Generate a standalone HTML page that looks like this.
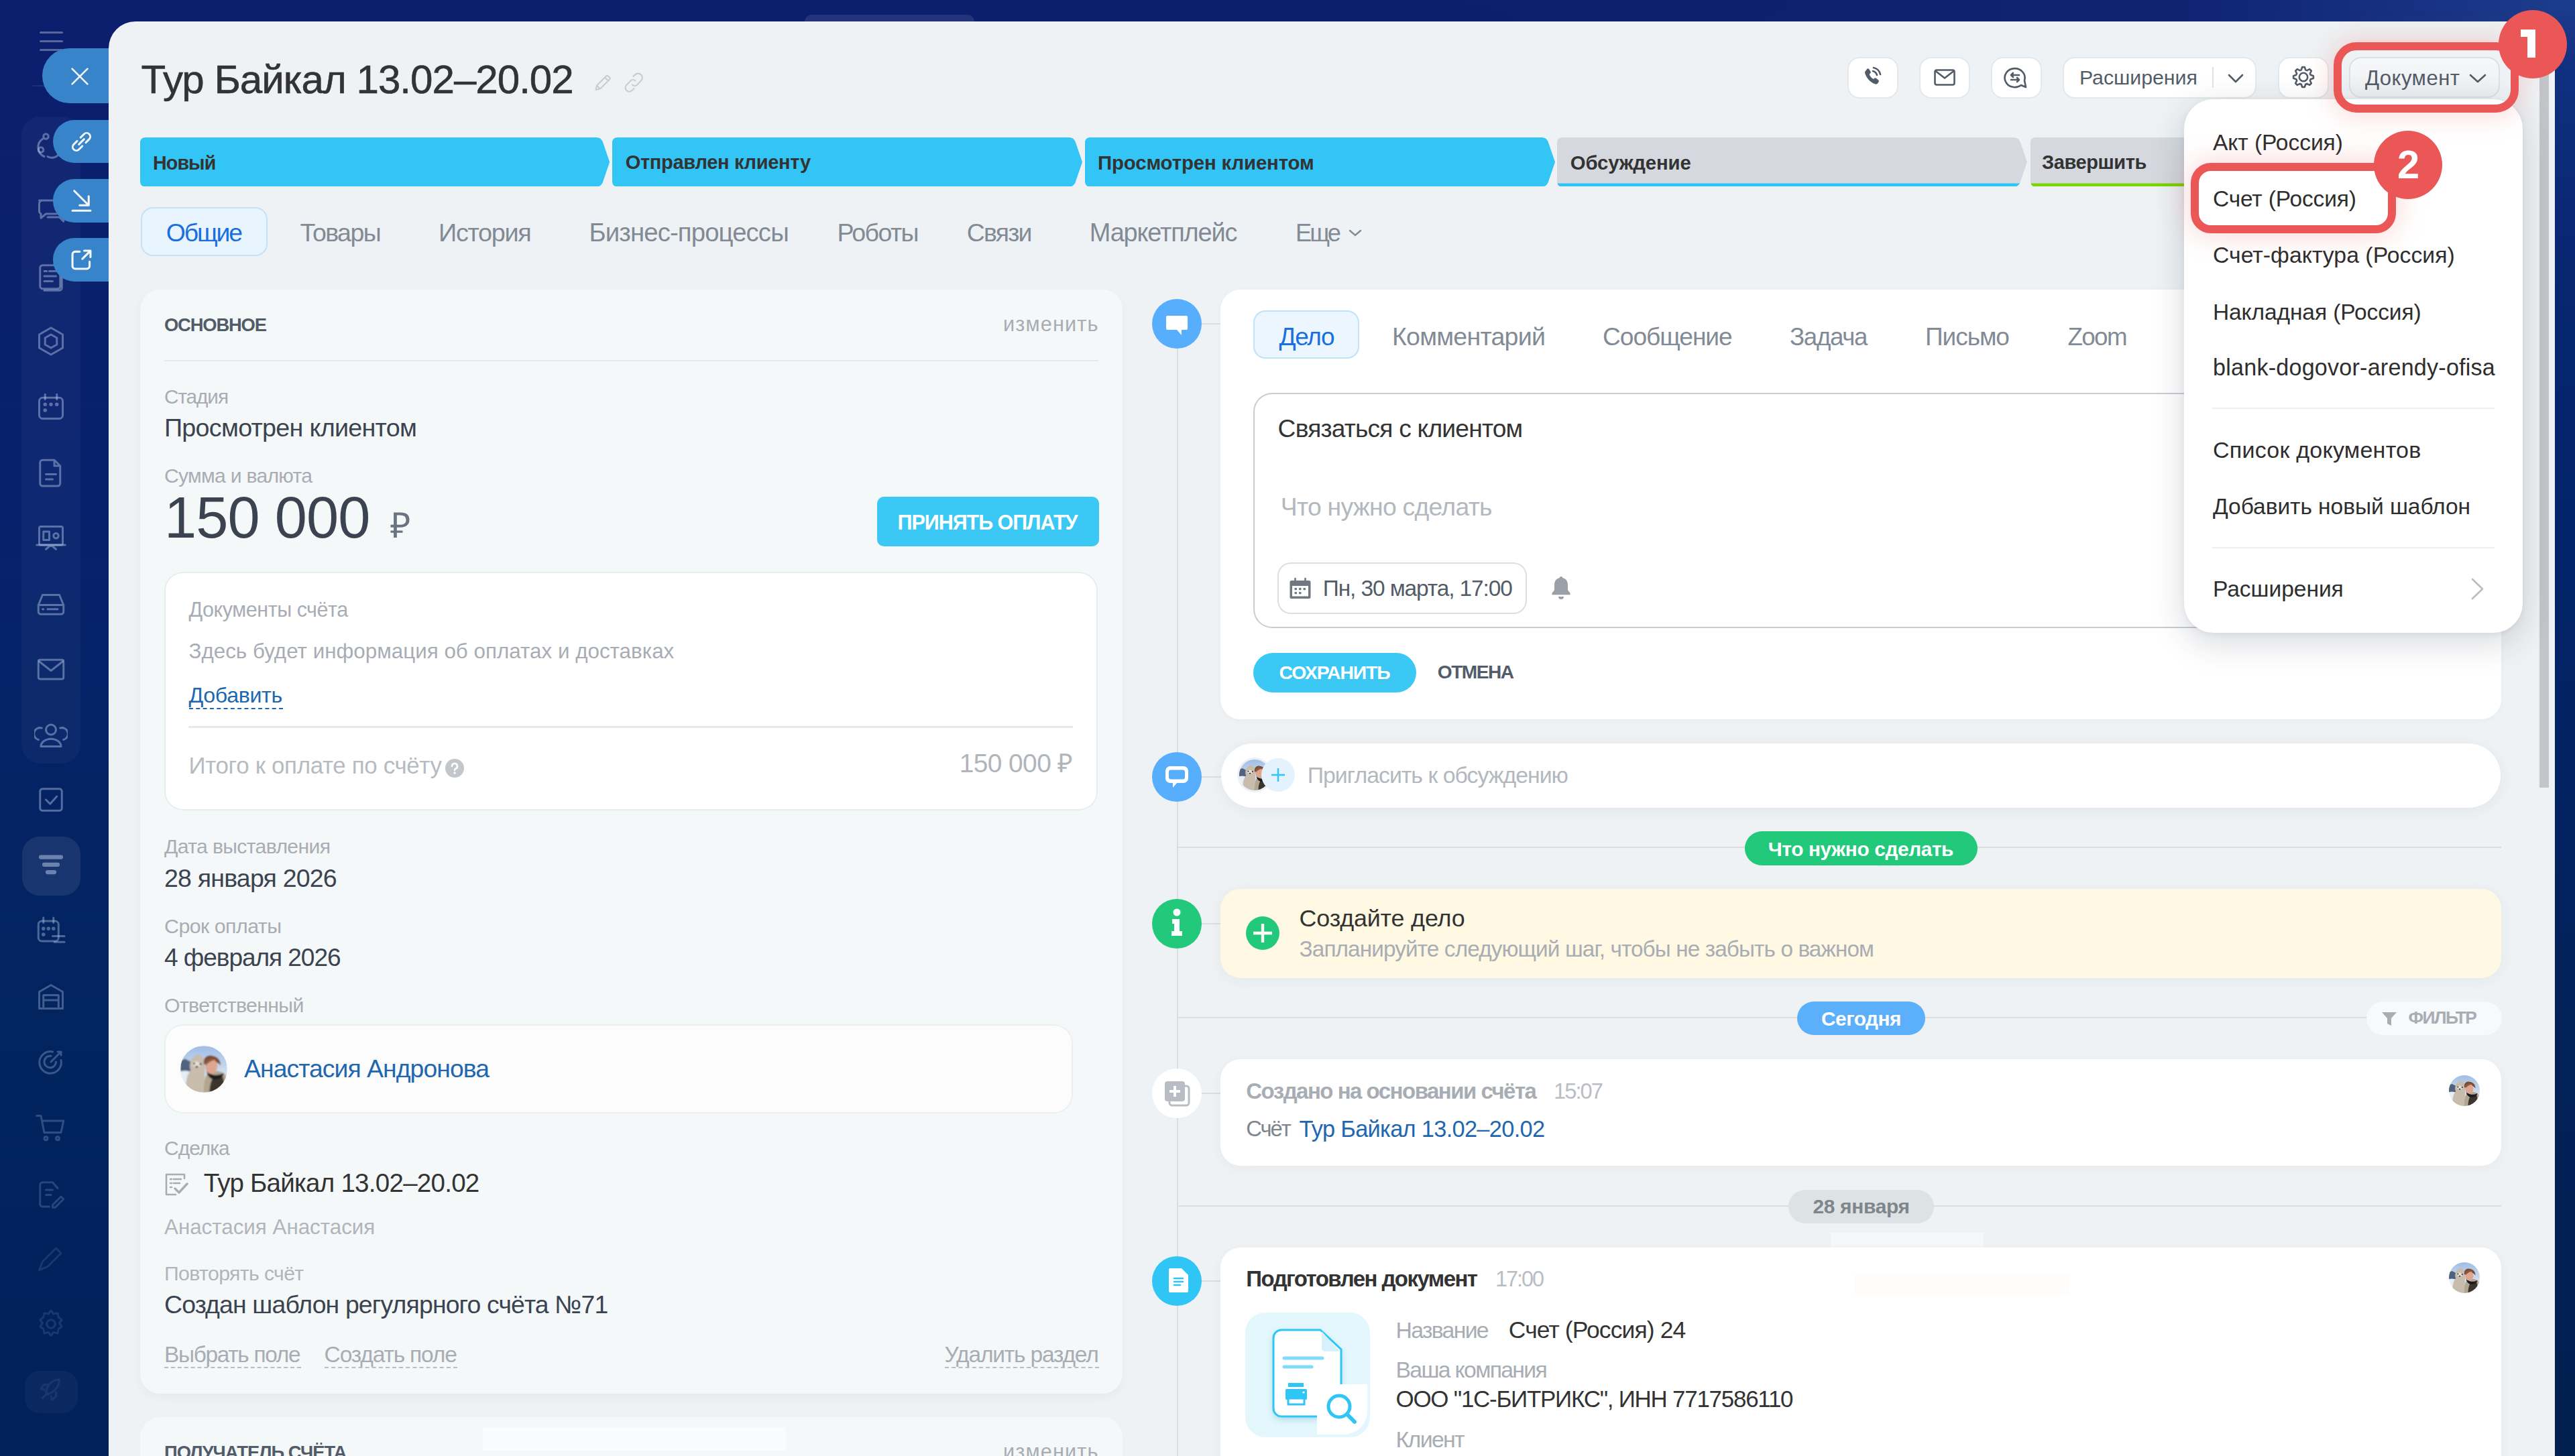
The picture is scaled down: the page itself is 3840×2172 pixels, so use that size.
<!DOCTYPE html>
<html><head><meta charset="utf-8"><title>Тур Байкал</title>
<style>html,body{margin:0;padding:0;width:3840px;height:2172px;overflow:hidden;background:#0b1f66;}
#root{position:relative;width:3840px;height:2172px;overflow:hidden;font-family:"Liberation Sans",sans-serif;
background:linear-gradient(180deg,#0c1e6e 0%,#06226c 35%,#02245f 70%,#00215a 100%);}
#root div, #root span, #root svg{position:absolute;box-sizing:border-box;}
.t{white-space:pre;display:block;}
</style></head>
<body>
<div id="root">
<div style="left:32px;top:174px;width:88px;height:965px;border-radius:28px;background:rgba(255,255,255,0.035);"></div>
<div style="left:33px;top:1248px;width:87px;height:88px;border-radius:26px;background:rgba(255,255,255,0.085);"></div>
<div style="left:37px;top:2045px;width:79px;height:63px;border-radius:22px;background:rgba(255,255,255,0.04);"></div>
<div style="left:59px;top:46.5px;width:35px;height:3px;background:rgba(255,255,255,0.32);border-radius:2px;"></div>
<div style="left:59px;top:59.5px;width:35px;height:3px;background:rgba(255,255,255,0.32);border-radius:2px;"></div>
<div style="left:59px;top:72.5px;width:35px;height:3px;background:rgba(255,255,255,0.32);border-radius:2px;"></div>
<div style="left:49px;top:127px;width:113px;height:2px;background:rgba(255,255,255,0.08);"></div>
<svg style="left:51px;top:191px;width:50px;height:50px;" viewBox="0 0 40 40"><g fill="none" stroke="rgba(190,205,235,0.44)" stroke-width="2.4" stroke-linecap="round" stroke-linejoin="round"><circle cx="14" cy="10" r="3"/><circle cx="8" cy="26" r="3"/><path d="M10 13 A12 12 0 0 0 12 34 M16 34 A 10 10 0 0 0 30 30"/></g></svg>
<svg style="left:51px;top:289px;width:50px;height:50px;" viewBox="0 0 40 40"><g fill="none" stroke="rgba(190,205,235,0.44)" stroke-width="2.4" stroke-linecap="round" stroke-linejoin="round"><path d="M6 8 h20 a4 4 0 0 1 4 4 v8 a4 4 0 0 1 -4 4 h-12 l-6 5 v-5 a4 4 0 0 1 -2 -4 v-8 a4 4 0 0 1 4 -4z"/><path d="M16 28 h14 l5 5 v-5 a3 3 0 0 0 3 -3 v-7"/></g></svg>
<svg style="left:51px;top:387px;width:50px;height:50px;" viewBox="0 0 40 40"><g fill="none" stroke="rgba(190,205,235,0.44)" stroke-width="2.4" stroke-linecap="round" stroke-linejoin="round"><rect x="7" y="7" width="24" height="28" rx="3"/><path d="M12 14 h3 M18 14 h8 M12 20 h14 M12 26 h10 M33 12 v22 a3 3 0 0 1 -3 3 h-18"/></g></svg>
<svg style="left:51px;top:484px;width:50px;height:50px;" viewBox="0 0 40 40"><g fill="none" stroke="rgba(190,205,235,0.44)" stroke-width="2.4" stroke-linecap="round" stroke-linejoin="round"><path d="M20 4 L34 12 V28 L20 36 L6 28 V12 Z"/><path d="M20 12 L27 16 V24 L20 28 L13 24 V16 Z"/></g></svg>
<svg style="left:51px;top:582px;width:50px;height:50px;" viewBox="0 0 40 40"><g fill="none" stroke="rgba(190,205,235,0.44)" stroke-width="2.4" stroke-linecap="round" stroke-linejoin="round"><rect x="6" y="9" width="28" height="25" rx="4"/><path d="M13 5 v6 M27 5 v6"/><circle cx="13" cy="17" r="1"/><circle cx="20" cy="17" r="1"/><circle cx="27" cy="17" r="1"/><circle cx="13" cy="24" r="1"/></g></svg>
<svg style="left:51px;top:680px;width:50px;height:50px;" viewBox="0 0 40 40"><g fill="none" stroke="rgba(190,205,235,0.44)" stroke-width="2.4" stroke-linecap="round" stroke-linejoin="round"><path d="M10 5 h14 l7 7 v21 a3 3 0 0 1 -3 3 h-18 a3 3 0 0 1 -3 -3 v-25 a3 3 0 0 1 3 -3z M24 5 v7 h7 M14 22 h12 M14 28 h8"/></g></svg>
<svg style="left:51px;top:778px;width:50px;height:50px;" viewBox="0 0 40 40"><g fill="none" stroke="rgba(190,205,235,0.44)" stroke-width="2.4" stroke-linecap="round" stroke-linejoin="round"><rect x="6" y="6" width="28" height="22" rx="2"/><path d="M3 28 h34 M14 33 l6 -5 6 5"/><rect x="11" y="12" width="7" height="10"/><circle cx="26" cy="17" r="3"/></g></svg>
<svg style="left:51px;top:875px;width:50px;height:50px;" viewBox="0 0 40 40"><g fill="none" stroke="rgba(190,205,235,0.44)" stroke-width="2.4" stroke-linecap="round" stroke-linejoin="round"><path d="M5 22 l5 -12 h20 l5 12 v8 a3 3 0 0 1 -3 3 h-24 a3 3 0 0 1 -3 -3z M5 22 h30 M10 27 h1 M16 27 h12"/></g></svg>
<svg style="left:51px;top:973px;width:50px;height:50px;" viewBox="0 0 40 40"><g fill="none" stroke="rgba(190,205,235,0.44)" stroke-width="2.4" stroke-linecap="round" stroke-linejoin="round"><rect x="5" y="9" width="30" height="23" rx="2"/><path d="M6 11 l14 11 14 -11"/></g></svg>
<svg style="left:51px;top:1071px;width:50px;height:50px;" viewBox="0 0 40 40"><g fill="none" stroke="rgba(190,205,235,0.44)" stroke-width="2.4" stroke-linecap="round" stroke-linejoin="round"><circle cx="20" cy="14" r="6"/><path d="M8 34 a12 9 0 0 1 24 0 z M9 12 a5 5 0 0 0 -4 14 M31 12 a5 5 0 0 1 4 14"/></g></svg>
<svg style="left:51px;top:1168px;width:50px;height:50px;" viewBox="0 0 40 40"><g fill="none" stroke="rgba(190,205,235,0.44)" stroke-width="2.4" stroke-linecap="round" stroke-linejoin="round"><rect x="7" y="7" width="26" height="26" rx="3"/><path d="M14 20 l5 5 8 -9"/></g></svg>
<svg style="left:51px;top:1266px;width:50px;height:50px;" viewBox="0 0 40 40"><g fill="none" stroke="rgba(190,205,235,0.5)" stroke-width="2.4" stroke-linecap="round" stroke-linejoin="round"><path d="M8 10 h24 M12 19 h16 M16 28 h8" stroke-width="5"/></g></svg>
<svg style="left:51px;top:1364px;width:50px;height:50px;" viewBox="0 0 40 40"><g fill="none" stroke="rgba(190,205,235,0.4)" stroke-width="2.4" stroke-linecap="round" stroke-linejoin="round"><rect x="5" y="8" width="24" height="24" rx="4"/><path d="M11 4 v6 M23 4 v6 M22 26 h14 M24 33 h12"/><circle cx="11" cy="17" r="1"/><circle cx="17" cy="17" r="1"/><circle cx="23" cy="17" r="1"/><circle cx="11" cy="24" r="1"/></g></svg>
<svg style="left:51px;top:1462px;width:50px;height:50px;" viewBox="0 0 40 40"><g fill="none" stroke="rgba(190,205,235,0.34)" stroke-width="2.4" stroke-linecap="round" stroke-linejoin="round"><path d="M6 14 L20 6 L34 14 V34 H6 Z M11 34 V18 H29 V34 M11 24 H29"/></g></svg>
<svg style="left:51px;top:1559px;width:50px;height:50px;" viewBox="0 0 40 40"><g fill="none" stroke="rgba(190,205,235,0.3)" stroke-width="2.4" stroke-linecap="round" stroke-linejoin="round"><path d="M32 18 A13 13 0 1 1 22 8"/><path d="M26 20 a7 7 0 1 1 -6 -7"/><path d="M20 20 L32 8 M28 8 h4 v4"/></g></svg>
<svg style="left:51px;top:1657px;width:50px;height:50px;" viewBox="0 0 40 40"><g fill="none" stroke="rgba(190,205,235,0.25)" stroke-width="2.4" stroke-linecap="round" stroke-linejoin="round"><path d="M3 6 h5 l4 20 h20 l3 -14 h-24"/><circle cx="14" cy="33" r="2"/><circle cx="28" cy="33" r="2"/></g></svg>
<svg style="left:51px;top:1755px;width:50px;height:50px;" viewBox="0 0 40 40"><g fill="none" stroke="rgba(190,205,235,0.21)" stroke-width="2.4" stroke-linecap="round" stroke-linejoin="round"><path d="M28 14 l-6 -7 h-12 a3 3 0 0 0 -3 3 v23 a3 3 0 0 0 3 3 h8 M14 16 h8 M14 22 h6 M22 34 l10 -10 3 3 -10 10 h-3z"/></g></svg>
<svg style="left:51px;top:1852px;width:50px;height:50px;" viewBox="0 0 40 40"><g fill="none" stroke="rgba(190,205,235,0.13)" stroke-width="2.4" stroke-linecap="round" stroke-linejoin="round"><path d="M6 34 l4 -10 16 -16 6 6 -16 16 z"/></g></svg>
<svg style="left:51px;top:1950px;width:50px;height:50px;" viewBox="0 0 40 40"><g fill="none" stroke="rgba(190,205,235,0.13)" stroke-width="2.4" stroke-linecap="round" stroke-linejoin="round"><circle cx="20" cy="20" r="5"/><path d="M20 4 l3 4 5 -1 1 5 4 3 -3 4 3 4 -4 3 -1 5 -5 -1 -3 4 -3 -4 -5 1 -1 -5 -4 -3 3 -4 -3 -4 4 -3 1 -5 5 1z"/></g></svg>
<svg style="left:51px;top:2048px;width:50px;height:50px;" viewBox="0 0 40 40"><g fill="none" stroke="rgba(190,205,235,0.09)" stroke-width="2.4" stroke-linecap="round" stroke-linejoin="round"><path d="M14 26 C14 14 22 8 30 8 C30 16 24 24 14 26z M16 24 l-6 6 M12 20 l-4 -1 4 -5 5 0 M20 28 l1 4 5 -4 0 -5"/></g></svg>
<div style="left:63px;top:72px;width:150px;height:82px;border-radius:41px;background:#3884cb;"></div>
<div style="left:79px;top:178.5px;width:130px;height:64px;border-radius:32px;background:#3884cb;"></div>
<div style="left:79px;top:266.5px;width:130px;height:65px;border-radius:32px;background:#3884cb;"></div>
<div style="left:79px;top:355px;width:130px;height:64.5px;border-radius:32px;background:#3884cb;"></div>
<svg style="left:102.5px;top:98px;width:32px;height:32px;" viewBox="0 0 28 28"><g fill="none" stroke="#f4f6f8" stroke-width="2.3" stroke-linecap="round" stroke-linejoin="round"><path d="M4 4 L24 24 M24 4 L4 24"/></g></svg>
<svg style="left:100.5px;top:190.5px;width:41px;height:41px;" viewBox="0 0 32 32"><g fill="none" stroke="#f4f6f8" stroke-width="2.3" stroke-linecap="round" stroke-linejoin="round"><path d="M13 19 l6 -6"/><path d="M11 15 l-4 4 a4.2 4.2 0 0 0 6 6 l4 -4"/><path d="M21 17 l4 -4 a4.2 4.2 0 0 0 -6 -6 l-4 4"/></g></svg>
<svg style="left:99.5px;top:278px;width:43px;height:43px;" viewBox="0 0 32 32"><g fill="none" stroke="#f4f6f8" stroke-width="2.3" stroke-linecap="round" stroke-linejoin="round"><path d="M8 5 L24 21 M24 11 V21 H14 M6 27 H26"/></g></svg>
<svg style="left:99.5px;top:366px;width:43px;height:43px;" viewBox="0 0 32 32"><g fill="none" stroke="#f4f6f8" stroke-width="2.3" stroke-linecap="round" stroke-linejoin="round"><path d="M14 7 H9 a3 3 0 0 0 -3 3 v13 a3 3 0 0 0 3 3 h13 a3 3 0 0 0 3 -3 v-5"/><path d="M17 15 L26 6 M19 6 h7 v7"/></g></svg>
<div style="left:0px;top:0px;width:3840px;height:34px;background:linear-gradient(90deg,rgba(12,29,108,0) 0%,rgba(12,29,108,0) 55%,rgba(24,52,130,0.25) 85%,rgba(34,70,150,0.75) 100%);"></div>
<div style="left:3808px;top:0px;width:32px;height:2172px;background:linear-gradient(180deg,#1d3c8c 0%,#10307f 5%,#092774 15%,#03236a 35%,#012259 70%,#011f50 100%);"></div>
<div style="left:1200px;top:22px;width:253px;height:14px;border-radius:10px 10px 0 0;background:rgba(255,255,255,0.10);"></div>
<div style="left:162px;top:32px;width:3648px;height:2200px;border-radius:40px 6px 0 0;background:#eef2f4;"></div>
<div style="left:3787px;top:100px;width:14px;height:1075px;background:#c2c5c9;"></div>
<span class="t" style="left:210.6px;top:88.7px;font-size:60.08px;line-height:60.08px;font-weight:400;color:#333333;letter-spacing:-1.00px;-webkit-text-stroke:0.6px #333333;">Тур Байкал 13.02–20.02</span>
<svg style="left:884px;top:108px;width:30px;height:30px;" viewBox="0 0 30 30"><g fill="none" stroke="#c8ccd0" stroke-width="2.1" stroke-linecap="round" stroke-linejoin="round"><path d="M4.5 26 l1.5 -6.5 L20 5.5 a2.2 2.2 0 0 1 3 0 l2 2 a2.2 2.2 0 0 1 0 3 L11 24.5 z M18 7.5 l4.5 4.5 M6 19.5 l4.5 4.5"/></g></svg>
<svg style="left:928px;top:106px;width:34px;height:34px;" viewBox="0 0 34 34"><g fill="none" stroke="#c8ccd0" stroke-width="2.1" stroke-linecap="round" stroke-linejoin="round"><path d="M19.5 14.5 C17.5 12.5 14.5 12.5 12.5 14.5 L6.5 20.5 C4 23 4 27 6.5 29 C9 31.5 12.5 31 15 28.5 L17.5 26"/><path d="M16.5 8 L19 5.5 C21.5 3 25.5 3 28 5.5 C30.5 8 30.5 12 28 14.5 L22 20.5 C20 22.5 17 22.5 15 20.5"/></g></svg>
<div style="left:2757px;top:86.5px;width:72px;height:58px;background:#ffffff;border-radius:16px;box-shadow:0 0 0 2px rgba(220,224,228,0.55);"></div>
<div style="left:2864px;top:86.5px;width:72px;height:58px;background:#ffffff;border-radius:16px;box-shadow:0 0 0 2px rgba(220,224,228,0.55);"></div>
<div style="left:2971px;top:86.5px;width:72px;height:58px;background:#ffffff;border-radius:16px;box-shadow:0 0 0 2px rgba(220,224,228,0.55);"></div>
<div style="left:3078px;top:86.5px;width:285px;height:58px;background:#ffffff;border-radius:16px;box-shadow:0 0 0 2px rgba(220,224,228,0.55);"></div>
<div style="left:3398.5px;top:86.5px;width:72px;height:58px;background:#ffffff;border-radius:16px;box-shadow:0 0 0 2px rgba(220,224,228,0.55);"></div>
<svg style="left:2776px;top:99px;width:32px;height:32px;" viewBox="0 0 32 32"><path fill="#525c69" d="M8.5 3.5c1-.6 2.1-.3 2.7.6l2.3 3.6c.6.9.4 2-.4 2.7l-1.6 1.3c1 2.6 3.4 5.6 6.1 7.3l1.6-1.3c.8-.7 2-.7 2.8 0l3.2 2.8c.8.7.9 1.9.3 2.8l-1.3 1.9c-.8 1.1-2.2 1.6-3.5 1.2C13.9 24.6 6.8 17 5.2 9.9c-.3-1.3.1-2.7 1.2-3.5z"/><g fill="none" stroke="#525c69" stroke-width="2.6" stroke-linecap="round" stroke-linejoin="round" stroke-width="2.2"><path d="M17 7 a8 8 0 0 1 6 6"/><path d="M18 2 a13 13 0 0 1 10 10"/></g></svg>
<svg style="left:2884px;top:103px;width:32px;height:25px;" viewBox="0 0 32 25"><g fill="none" stroke="#525c69" stroke-width="2.6" stroke-linecap="round" stroke-linejoin="round"><rect x="1.5" y="1.5" width="29" height="22" rx="2.5"/><path d="M2.5 3 L16 13.5 L29.5 3"/></g></svg>
<svg style="left:2988px;top:100px;width:36px;height:33px;" viewBox="0 0 36 33"><g fill="none" stroke="#525c69" stroke-width="2.6" stroke-linecap="round" stroke-linejoin="round"><path d="M31 20 A15 14 0 1 0 26 27 L33 30 Z"/><path d="M11 12 H23 M14 9 L11 12 L14 15 M11 19 H23 M20 16 L23 19 L20 22"/></g></svg>
<span class="t" style="left:3100.9px;top:101.1px;font-size:30.32px;line-height:30.32px;font-weight:400;color:#525c69;letter-spacing:-0.04px;">Расширения</span>
<div style="left:3299px;top:100px;width:2px;height:31px;background:#dfe2e5;"></div>
<svg style="left:3322px;top:110px;width:24px;height:15px;" viewBox="0 0 24 15"><g fill="none" stroke="#525c69" stroke-width="2.6" stroke-linecap="round" stroke-linejoin="round" stroke-width="2.4"><path d="M2 2 L12 12 L22 2"/></g></svg>
<svg style="left:3417.6px;top:98.3px;width:34px;height:34px;" viewBox="0 0 34 34"><g fill="none" stroke="#525c69" stroke-width="2.6" stroke-linecap="round" stroke-linejoin="round" stroke-width="2.5"><circle cx="17" cy="17" r="6.2"/><path d="M27.73 13.80 L31.89 15.15 L31.89 18.85 L27.73 20.20 L26.85 22.32 L28.83 26.22 L26.22 28.83 L22.32 26.85 L20.20 27.73 L18.85 31.89 L15.15 31.89 L13.80 27.73 L11.68 26.85 L7.78 28.83 L5.17 26.22 L7.15 22.32 L6.27 20.20 L2.11 18.85 L2.11 15.15 L6.27 13.80 L7.15 11.68 L5.17 7.78 L7.78 5.17 L11.68 7.15 L13.80 6.27 L15.15 2.11 L18.85 2.11 L20.20 6.27 L22.32 7.15 L26.22 5.17 L28.83 7.78 L26.85 11.68 Z"/></g></svg>
<div style="left:3503px;top:85px;width:225px;height:61px;background:linear-gradient(180deg,#f7f8f9,#eceef0);border-radius:18px;box-shadow:inset 0 0 0 2px #dcdfe3;"></div>
<span class="t" style="left:3527.0px;top:101.2px;font-size:31.08px;line-height:31.08px;font-weight:400;color:#525c69;letter-spacing:0.45px;">Документ</span>
<svg style="left:3682px;top:110px;width:26px;height:15px;" viewBox="0 0 26 15"><g fill="none" stroke="#525c69" stroke-width="2.6" stroke-linecap="round" stroke-linejoin="round" stroke-width="2.4"><path d="M2 2 L13 12 L24 2"/></g></svg>
<svg style="left:209.3px;top:204.5px;width:700.2px;height:73.5px" viewBox="0 0 700.2 73.5"><path d="M8 0 H680.7 Q686.7 0 689.7 6 L700.2 36.75 L689.7 67.5 Q686.7 73.5 680.7 73.5 H8 Q0 73.5 0 65.5 V8 Q0 0 8 0 Z" fill="#32c5f6"/></svg>
<svg style="left:913px;top:204.5px;width:701px;height:73.5px" viewBox="0 0 701 73.5"><path d="M8 0 H681.5 Q687.5 0 690.5 6 L701 36.75 L690.5 67.5 Q687.5 73.5 681.5 73.5 H8 Q0 73.5 0 65.5 V8 Q0 0 8 0 Z" fill="#32c5f6"/></svg>
<svg style="left:1618px;top:204.5px;width:701px;height:73.5px" viewBox="0 0 701 73.5"><path d="M8 0 H681.5 Q687.5 0 690.5 6 L701 36.75 L690.5 67.5 Q687.5 73.5 681.5 73.5 H8 Q0 73.5 0 65.5 V8 Q0 0 8 0 Z" fill="#32c5f6"/></svg>
<svg style="left:2322px;top:204.5px;width:701px;height:73.5px" viewBox="0 0 701 73.5"><defs><clipPath id="c2322"><path d="M8 0 H681.5 Q687.5 0 690.5 6 L701 36.75 L690.5 67.5 Q687.5 73.5 681.5 73.5 H8 Q0 73.5 0 65.5 V8 Q0 0 8 0 Z"/></clipPath></defs><g clip-path="url(#c2322)"><rect width="701" height="73.5" fill="#d5d9df"/><rect y="68.5" width="701" height="5" fill="#2fc6f6"/></g></svg>
<svg style="left:3027.5px;top:204.5px;width:700.5px;height:73.5px" viewBox="0 0 700.5 73.5"><defs><clipPath id="c3027"><path d="M8 0 H681.0 Q687.0 0 690.0 6 L700.5 36.75 L690.0 67.5 Q687.0 73.5 681.0 73.5 H8 Q0 73.5 0 65.5 V8 Q0 0 8 0 Z"/></clipPath></defs><g clip-path="url(#c3027)"><rect width="700.5" height="73.5" fill="#d5d9df"/><rect y="68.5" width="700.5" height="5" fill="#7bd500"/></g></svg>
<span class="t" style="left:228.0px;top:228.6px;font-size:28.63px;line-height:28.63px;font-weight:700;color:#333333;letter-spacing:-0.88px;">Новый</span>
<span class="t" style="left:932.7px;top:228.2px;font-size:29.09px;line-height:29.09px;font-weight:700;color:#333333;letter-spacing:-0.34px;">Отправлен клиенту</span>
<span class="t" style="left:1637.0px;top:227.9px;font-size:29.40px;line-height:29.40px;font-weight:700;color:#333333;letter-spacing:-0.15px;">Просмотрен клиентом</span>
<span class="t" style="left:2341.8px;top:227.9px;font-size:29.39px;line-height:29.39px;font-weight:700;color:#333333;letter-spacing:-0.18px;">Обсуждение</span>
<span class="t" style="left:3045.0px;top:228.2px;font-size:29.04px;line-height:29.04px;font-weight:700;color:#333333;letter-spacing:-0.42px;">Завершить</span>
<div style="left:210px;top:309px;width:188.6px;height:73px;background:#e9f5fe;border-radius:18px;box-shadow:inset 0 0 0 2px #c3e2f8;"></div>
<span class="t" style="left:247.8px;top:329.0px;font-size:37.28px;line-height:37.28px;font-weight:400;color:#1a6ee0;letter-spacing:-2.09px;">Общие</span>
<span class="t" style="left:447.5px;top:328.8px;font-size:37.53px;line-height:37.53px;font-weight:400;color:#828b95;letter-spacing:-1.58px;">Товары</span>
<span class="t" style="left:654.0px;top:328.6px;font-size:37.82px;line-height:37.82px;font-weight:400;color:#828b95;letter-spacing:-1.30px;">История</span>
<span class="t" style="left:878.6px;top:328.2px;font-size:38.31px;line-height:38.31px;font-weight:400;color:#828b95;letter-spacing:-0.88px;">Бизнес-процессы</span>
<span class="t" style="left:1248.5px;top:328.8px;font-size:37.54px;line-height:37.54px;font-weight:400;color:#828b95;letter-spacing:-1.58px;">Роботы</span>
<span class="t" style="left:1441.8px;top:329.0px;font-size:37.35px;line-height:37.35px;font-weight:400;color:#828b95;letter-spacing:-1.73px;">Связи</span>
<span class="t" style="left:1624.8px;top:328.5px;font-size:37.93px;line-height:37.93px;font-weight:400;color:#828b95;letter-spacing:-1.16px;">Маркетплейс</span>
<span class="t" style="left:1932.0px;top:329.9px;font-size:36.25px;line-height:36.25px;font-weight:400;color:#828b95;letter-spacing:-2.90px;">Еще</span>
<svg style="left:2011px;top:342px;width:20px;height:12px;" viewBox="0 0 20 12"><path d="M2 2 L10 9 L18 2" fill="none" stroke="#828b95" stroke-width="2.4" stroke-linecap="round"/></svg>
<div style="left:209px;top:432px;width:1465px;height:1646.5px;background:#f5f8f9;border-radius:30px;box-shadow:0 6px 16px rgba(0,0,0,0.035);"></div>
<span class="t" style="left:245.0px;top:470.8px;font-size:27.38px;line-height:27.38px;font-weight:700;color:#525c69;letter-spacing:-1.18px;">ОСНОВНОЕ</span>
<span class="t" style="left:1495.9px;top:468.0px;font-size:30.67px;line-height:30.67px;font-weight:400;color:#a8adb4;letter-spacing:1.18px;">изменить</span>
<div style="left:245px;top:536.5px;width:1393px;height:2.5px;background:#e6e9ec;"></div>
<span class="t" style="left:245.0px;top:576.6px;font-size:29.71px;line-height:29.71px;font-weight:400;color:#a8adb4;letter-spacing:-1.05px;">Стадия</span>
<span class="t" style="left:245.0px;top:619.9px;font-size:37.70px;line-height:37.70px;font-weight:400;color:#3b4350;letter-spacing:-0.72px;">Просмотрен клиентом</span>
<span class="t" style="left:245.0px;top:694.5px;font-size:30.08px;line-height:30.08px;font-weight:400;color:#a8adb4;letter-spacing:-0.69px;">Сумма и валюта</span>
<span class="t" style="left:245.0px;top:729.4px;font-size:86.56px;line-height:86.56px;font-weight:400;color:#3b4350;letter-spacing:-0.92px;">150 000</span>
<span class="t" style="left:581.5px;top:758.3px;font-size:52.46px;line-height:52.46px;font-weight:400;color:#6a737f;letter-spacing:0.08px;">₽</span>
<div style="left:1308px;top:740.5px;width:331px;height:74px;background:#3bc8f5;border-radius:10px;"></div>
<span class="t" style="left:1338.6px;top:764.0px;font-size:30.52px;line-height:30.52px;font-weight:700;color:#ffffff;letter-spacing:-1.04px;">ПРИНЯТЬ ОПЛАТУ</span>
<div style="left:245px;top:853px;width:1392px;height:356px;background:#ffffff;border-radius:28px;box-shadow:inset 0 0 0 2px #e9ecef;"></div>
<span class="t" style="left:281.5px;top:894.2px;font-size:30.48px;line-height:30.48px;font-weight:400;color:#a8adb4;letter-spacing:-0.44px;">Документы счёта</span>
<span class="t" style="left:281.5px;top:956.2px;font-size:31.32px;line-height:31.32px;font-weight:400;color:#a8adb4;letter-spacing:0.03px;">Здесь будет информация об оплатах и доставках</span>
<span class="t" style="left:281.5px;top:1021.3px;font-size:32.17px;line-height:32.17px;font-weight:400;color:#2067b0;letter-spacing:-0.34px;">Добавить</span>
<div style="left:281.5px;top:1055.5px;width:140px;height:0;border-top:2px dashed #2067b0;"></div>
<div style="left:281px;top:1083px;width:1319px;height:2.5px;background:#e6e9ec;"></div>
<span class="t" style="left:281.5px;top:1124.9px;font-size:34.93px;line-height:34.93px;font-weight:400;color:#b6bbc1;letter-spacing:-0.34px;">Итого к оплате по счёту</span>
<svg style="left:663px;top:1131px;width:30px;height:30px;" viewBox="0 0 30 30"><circle cx="15" cy="15" r="14" fill="#c3c7cc"/><path d="M11 12 a4 4 0 1 1 5.5 3.7 c-1 .5 -1.5 1 -1.5 2.3" fill="none" stroke="#fff" stroke-width="2.6" stroke-linecap="round"/><circle cx="15" cy="22" r="1.7" fill="#fff"/></svg>
<span class="t" style="left:1430.7px;top:1119.9px;font-size:38.84px;line-height:38.84px;font-weight:400;color:#b0b5bb;letter-spacing:-0.55px;">150 000 ₽</span>
<span class="t" style="left:245.0px;top:1247.5px;font-size:30.14px;line-height:30.14px;font-weight:400;color:#a8adb4;letter-spacing:-0.63px;">Дата выставления</span>
<span class="t" style="left:245.0px;top:1291.6px;font-size:37.51px;line-height:37.51px;font-weight:400;color:#3b4350;letter-spacing:-0.80px;">28 января 2026</span>
<span class="t" style="left:245.0px;top:1366.9px;font-size:30.35px;line-height:30.35px;font-weight:400;color:#a8adb4;letter-spacing:-0.53px;">Срок оплаты</span>
<span class="t" style="left:245.0px;top:1410.1px;font-size:37.09px;line-height:37.09px;font-weight:400;color:#3b4350;letter-spacing:-1.07px;">4 февраля 2026</span>
<span class="t" style="left:245.0px;top:1485.2px;font-size:30.21px;line-height:30.21px;font-weight:400;color:#a8adb4;letter-spacing:-0.62px;">Ответственный</span>
<div style="left:245px;top:1528px;width:1355px;height:132.5px;background:#fcfcfd;border-radius:28px;box-shadow:inset 0 0 0 2px #eceff1;"></div>
<svg style="left:268.7px;top:1560px;width:70px;height:70px;" viewBox="0 0 100 100"><defs><clipPath id="av3031595"><circle cx="50" cy="50" r="50"/></clipPath><filter id="bl3031595"><feGaussianBlur stdDeviation="1.3"/></filter><linearGradient id="sk3031595" x1="0" y1="0" x2="0" y2="1"><stop offset="0" stop-color="#9fbde6"/><stop offset="0.6" stop-color="#d3e0ef"/><stop offset="1" stop-color="#eef3f8"/></linearGradient></defs><g clip-path="url(#av3031595)"><g filter="url(#bl3031595)"><rect width="100" height="100" fill="url(#sk3031595)"/><path d="M0 32 L10 28 L22 34 L30 40 V70 H0 Z" fill="#4f6280"/><path d="M0 55 Q15 50 30 60 V100 H0 Z" fill="#e6edf5"/><path d="M12 100 C10 80 14 60 22 52 C18 44 20 30 30 22 C38 16 48 20 50 30 C54 45 50 70 54 100 Z" fill="#c8bdad"/><path d="M24 38 C28 32 40 32 44 40 C42 48 30 50 24 38 Z" fill="#e6e0d6"/><circle cx="29" cy="38" r="2.2" fill="#2a2a2a"/><circle cx="43" cy="39" r="2.2" fill="#2a2a2a"/><ellipse cx="35" cy="45" rx="3" ry="2" fill="#3a3430"/><path d="M50 100 C50 80 52 62 60 58 C70 52 86 52 96 62 C100 70 100 90 100 100 Z" fill="#b2a690"/><path d="M62 100 C62 85 66 70 72 66 L90 66 C94 76 94 90 92 100 Z" fill="#3a342f"/><path d="M56 52 C60 60 76 68 92 58 C92 66 84 72 72 72 C62 70 56 62 56 52 Z" fill="#1d1d22"/><path d="M50 40 C48 24 58 20 66 21 C78 22 86 30 86 42 C84 40 76 30 60 34 C56 36 52 40 50 40Z" fill="#7b4b34"/><ellipse cx="66" cy="44" rx="13" ry="16" fill="#dea68e"/><path d="M52 36 C56 26 70 24 78 30 C72 30 62 32 54 42Z" fill="#8a5a40"/></g></g></svg>
<span class="t" style="left:364.0px;top:1576.4px;font-size:37.32px;line-height:37.32px;font-weight:400;color:#2067b0;letter-spacing:-0.93px;">Анастасия Андронова</span>
<span class="t" style="left:245.0px;top:1698.4px;font-size:29.88px;line-height:29.88px;font-weight:400;color:#a8adb4;letter-spacing:-0.94px;">Сделка</span>
<svg style="left:245px;top:1748px;width:37px;height:38px;" viewBox="0 0 37 38"><g fill="none" stroke="#a8adb4" stroke-width="2.6" stroke-linejoin="round" stroke-linecap="round"><path d="M30 10 V4 H3 V34 H17"/><path d="M9 11 h2 M14 11 h11 M9 17 h2 M14 17 h9 M9 23 h2"/><path d="M16 25 l6 6 12 -13" stroke-width="3.4"/></g></svg>
<span class="t" style="left:303.7px;top:1746.4px;font-size:38.56px;line-height:38.56px;font-weight:400;color:#333333;letter-spacing:-0.75px;">Тур Байкал 13.02–20.02</span>
<span class="t" style="left:245.0px;top:1814.5px;font-size:31.29px;line-height:31.29px;font-weight:400;color:#b0b5bb;letter-spacing:0.02px;">Анастасия Анастасия</span>
<span class="t" style="left:245.0px;top:1884.5px;font-size:30.18px;line-height:30.18px;font-weight:400;color:#b0b5bb;letter-spacing:-0.59px;">Повторять счёт</span>
<span class="t" style="left:245.0px;top:1927.9px;font-size:37.39px;line-height:37.39px;font-weight:400;color:#3b4350;letter-spacing:-0.85px;">Создан шаблон регулярного счёта №71</span>
<span class="t" style="left:245.0px;top:2004.1px;font-size:33.42px;line-height:33.42px;font-weight:400;color:#a8adb4;letter-spacing:-1.30px;">Выбрать поле</span>
<div style="left:245px;top:2039px;width:203.7px;height:0;border-top:2px dashed #b8bdc3;"></div>
<span class="t" style="left:483.6px;top:2004.0px;font-size:33.57px;line-height:33.57px;font-weight:400;color:#a8adb4;letter-spacing:-1.17px;">Создать поле</span>
<div style="left:483.6px;top:2039px;width:198.39999999999998px;height:0;border-top:2px dashed #b8bdc3;"></div>
<span class="t" style="left:1408.6px;top:2004.0px;font-size:33.52px;line-height:33.52px;font-weight:400;color:#a8adb4;letter-spacing:-1.18px;">Удалить раздел</span>
<div style="left:1408.6px;top:2039px;width:230.20000000000005px;height:0;border-top:2px dashed #b8bdc3;"></div>
<div style="left:209px;top:2114px;width:1465px;height:200px;background:#f5f8f9;border-radius:30px;"></div>
<div style="left:720px;top:2128.5px;width:452px;height:35px;background:rgba(255,255,255,0.45);"></div>
<span class="t" style="left:245.0px;top:2152.8px;font-size:27.38px;line-height:27.38px;font-weight:700;color:#525c69;letter-spacing:-0.98px;">ПОЛУЧАТЕЛЬ СЧЁТА</span>
<span class="t" style="left:1495.9px;top:2150.0px;font-size:30.67px;line-height:30.67px;font-weight:400;color:#a8adb4;letter-spacing:1.18px;">изменить</span>
<div style="left:1755px;top:500px;width:2px;height:1700px;background:#dfdddb;"></div>
<div style="left:1790px;top:482px;width:32px;height:2px;background:#dfdddb;"></div>
<div style="left:1790px;top:1158px;width:32px;height:2px;background:#dfdddb;"></div>
<div style="left:1790px;top:1377px;width:32px;height:2px;background:#dfdddb;"></div>
<div style="left:1790px;top:1630px;width:32px;height:2px;background:#dfdddb;"></div>
<div style="left:1790px;top:1910px;width:32px;height:2px;background:#dfdddb;"></div>
<div style="left:1820px;top:432px;width:1910px;height:640.5px;background:#ffffff;border-radius:30px;box-shadow:0 4px 20px rgba(40,50,70,0.04);box-shadow:0 2px 8px rgba(0,0,0,0.03);"></div>
<div style="left:1718px;top:446px;width:74px;height:74px;border-radius:50%;background:#56aefc;"></div>
<svg style="left:1738px;top:469px;width:34px;height:32px;" viewBox="0 0 34 32"><path d="M3 2 h28 a2 2 0 0 1 2 2 v17 a2 2 0 0 1 -2 2 h-7 v8 l-7 -8 h-14 a2 2 0 0 1 -2 -2 v-17 a2 2 0 0 1 2 -2z" fill="#fff"/></svg>
<div style="left:1869px;top:463px;width:158px;height:72px;background:#ebf6fe;border-radius:18px;box-shadow:inset 0 0 0 2px #c2e2f9;"></div>
<span class="t" style="left:1907.5px;top:484.4px;font-size:37.00px;line-height:37.00px;font-weight:400;color:#1a6ee0;letter-spacing:-1.30px;">Дело</span>
<span class="t" style="left:2076.0px;top:484.0px;font-size:37.50px;line-height:37.50px;font-weight:400;color:#828b95;letter-spacing:-0.73px;">Комментарий</span>
<span class="t" style="left:2390.0px;top:484.3px;font-size:37.14px;line-height:37.14px;font-weight:400;color:#828b95;letter-spacing:-1.04px;">Сообщение</span>
<span class="t" style="left:2669.0px;top:484.7px;font-size:36.68px;line-height:36.68px;font-weight:400;color:#828b95;letter-spacing:-1.33px;">Задача</span>
<span class="t" style="left:2871.0px;top:484.3px;font-size:37.12px;line-height:37.12px;font-weight:400;color:#828b95;letter-spacing:-1.09px;">Письмо</span>
<span class="t" style="left:3083.4px;top:484.6px;font-size:36.78px;line-height:36.78px;font-weight:400;color:#828b95;letter-spacing:-1.61px;">Zoom</span>
<div style="left:1869px;top:586px;width:1812px;height:350.5px;border-radius:28px;box-shadow:inset 0 0 0 2px #c9cdd1;"></div>
<span class="t" style="left:1905.6px;top:621.1px;font-size:37.18px;line-height:37.18px;font-weight:400;color:#333333;letter-spacing:-0.80px;">Связаться с клиентом</span>
<span class="t" style="left:1909.8px;top:737.8px;font-size:37.33px;line-height:37.33px;font-weight:400;color:#b3b8be;letter-spacing:-0.73px;">Что нужно сделать</span>
<div style="left:1904.5px;top:839px;width:372.5px;height:77px;border-radius:20px;box-shadow:inset 0 0 0 2px #dcdfe2;"></div>
<svg style="left:1922px;top:861px;width:34px;height:33px;" viewBox="0 0 34 33"><path d="M4 5 h26 a2.5 2.5 0 0 1 2.5 2.5 v22 a2.5 2.5 0 0 1 -2.5 2.5 h-26 a2.5 2.5 0 0 1 -2.5 -2.5 v-22 a2.5 2.5 0 0 1 2.5 -2.5z M5 13 v15.5 h24 v-15.5z" fill="#6f7780" fill-rule="evenodd"/><path d="M9.5 2 v5 M24.5 2 v5" stroke="#6f7780" stroke-width="2.6" stroke-linecap="round"/><g fill="#6f7780"><rect x="8.5" y="16" width="3.5" height="3.2" rx="0.8"/><rect x="15" y="16" width="3.5" height="3.2" rx="0.8"/><rect x="21.5" y="16" width="3.5" height="3.2" rx="0.8"/><rect x="8.5" y="22" width="3.5" height="3.2" rx="0.8"/><rect x="15" y="22" width="3.5" height="3.2" rx="0.8"/></g></svg>
<span class="t" style="left:1972.8px;top:861.1px;font-size:33.44px;line-height:33.44px;font-weight:400;color:#525c69;letter-spacing:-1.09px;">Пн, 30 марта, 17:00</span>
<svg style="left:2312px;top:858px;width:32px;height:38px;" viewBox="0 0 32 38"><path d="M16 2 c1.5 0 2.5 1 2.5 2.3 c5 1.2 7.5 5 7.5 10 v8 l3.5 4.5 v2.5 h-27 v-2.5 l3.5 -4.5 v-8 c0 -5 2.5 -8.8 7.5 -10 c0 -1.3 1 -2.3 2.5 -2.3z M12 32 h8 a4 4 0 0 1 -8 0z" fill="#9aa0a7"/></svg>
<div style="left:1869px;top:973.5px;width:243px;height:59.5px;background:#3bc8f5;border-radius:30px;"></div>
<span class="t" style="left:1907.5px;top:989.0px;font-size:28.35px;line-height:28.35px;font-weight:700;color:#ffffff;letter-spacing:-1.11px;">СОХРАНИТЬ</span>
<span class="t" style="left:2143.8px;top:989.2px;font-size:28.08px;line-height:28.08px;font-weight:700;color:#535c69;letter-spacing:-1.49px;">ОТМЕНА</span>
<div style="left:1821px;top:1108.5px;width:1908px;height:96.5px;background:#ffffff;border-radius:48px;box-shadow:0 4px 22px rgba(40,50,70,0.06);"></div>
<div style="left:1718px;top:1122px;width:74px;height:74px;border-radius:50%;background:#56aefc;"></div>
<svg style="left:1736px;top:1140px;width:38px;height:40px;" viewBox="0 0 38 40"><path d="M9 3 h20 a7 7 0 0 1 7 7 v11 a7 7 0 0 1 -7 7 h-10 l-6 7 v-7 h-4 a7 7 0 0 1 -7 -7 v-11 a7 7 0 0 1 7 -7z M10 8.5 a3 3 0 0 0 -3 3 v8 a3 3 0 0 0 3 3 h18 a3 3 0 0 0 3 -3 v-8 a3 3 0 0 0 -3 -3z" fill="#fff" fill-rule="evenodd"/></svg>
<div style="left:1845px;top:1130px;width:52px;height:52px;border-radius:50%;background:#eef1f3;"></div>
<svg style="left:1848px;top:1133px;width:46px;height:46px;" viewBox="0 0 100 100"><defs><clipPath id="av18711156"><circle cx="50" cy="50" r="50"/></clipPath><filter id="bl18711156"><feGaussianBlur stdDeviation="1.3"/></filter><linearGradient id="sk18711156" x1="0" y1="0" x2="0" y2="1"><stop offset="0" stop-color="#9fbde6"/><stop offset="0.6" stop-color="#d3e0ef"/><stop offset="1" stop-color="#eef3f8"/></linearGradient></defs><g clip-path="url(#av18711156)"><g filter="url(#bl18711156)"><rect width="100" height="100" fill="url(#sk18711156)"/><path d="M0 32 L10 28 L22 34 L30 40 V70 H0 Z" fill="#4f6280"/><path d="M0 55 Q15 50 30 60 V100 H0 Z" fill="#e6edf5"/><path d="M12 100 C10 80 14 60 22 52 C18 44 20 30 30 22 C38 16 48 20 50 30 C54 45 50 70 54 100 Z" fill="#c8bdad"/><path d="M24 38 C28 32 40 32 44 40 C42 48 30 50 24 38 Z" fill="#e6e0d6"/><circle cx="29" cy="38" r="2.2" fill="#2a2a2a"/><circle cx="43" cy="39" r="2.2" fill="#2a2a2a"/><ellipse cx="35" cy="45" rx="3" ry="2" fill="#3a3430"/><path d="M50 100 C50 80 52 62 60 58 C70 52 86 52 96 62 C100 70 100 90 100 100 Z" fill="#b2a690"/><path d="M62 100 C62 85 66 70 72 66 L90 66 C94 76 94 90 92 100 Z" fill="#3a342f"/><path d="M56 52 C60 60 76 68 92 58 C92 66 84 72 72 72 C62 70 56 62 56 52 Z" fill="#1d1d22"/><path d="M50 40 C48 24 58 20 66 21 C78 22 86 30 86 42 C84 40 76 30 60 34 C56 36 52 40 50 40Z" fill="#7b4b34"/><ellipse cx="66" cy="44" rx="13" ry="16" fill="#dea68e"/><path d="M52 36 C56 26 70 24 78 30 C72 30 62 32 54 42Z" fill="#8a5a40"/></g></g></svg>
<div style="left:1881px;top:1131px;width:50px;height:50px;border-radius:50%;background:#e3f2fd;"></div>
<svg style="left:1892px;top:1142px;width:28px;height:28px;" viewBox="0 0 28 28"><path d="M14 4 v20 M4 14 h20" stroke="#2fc6f6" stroke-width="2.4"/></svg>
<span class="t" style="left:1949.7px;top:1140.4px;font-size:33.83px;line-height:33.83px;font-weight:400;color:#b3b8be;letter-spacing:-0.98px;">Пригласить к обсуждению</span>
<div style="left:1757px;top:1263px;width:1973px;height:2px;background:#dfdddb;"></div>
<div style="left:2602px;top:1240px;width:346.5px;height:51px;background:#22c97a;border-radius:26px;"></div>
<span class="t" style="left:2636.8px;top:1252.4px;font-size:29.85px;line-height:29.85px;font-weight:700;color:#ffffff;letter-spacing:-0.40px;">Что нужно сделать</span>
<div style="left:1820px;top:1326px;width:1910px;height:132.5px;background:#fff8e3;border-radius:30px;box-shadow:0 4px 22px rgba(40,50,70,0.05);"></div>
<div style="left:1718px;top:1341px;width:74px;height:74px;border-radius:50%;background:#22c97a;"></div>
<svg style="left:1740px;top:1352px;width:30px;height:50px;" viewBox="0 0 30 50"><circle cx="15" cy="9" r="5.5" fill="#fff"/><path d="M8 19 h11 v18 h4 v7 h-16 v-7 h4 v-11 h-3z" fill="#fff"/></svg>
<div style="left:1858px;top:1367px;width:50px;height:50px;border-radius:50%;background:#22c97a;"></div>
<svg style="left:1866px;top:1375px;width:34px;height:34px;" viewBox="0 0 34 34"><path d="M17 3 v28 M3 17 h28" stroke="#fff" stroke-width="4.4"/></svg>
<span class="t" style="left:1937.5px;top:1352.9px;font-size:35.83px;line-height:35.83px;font-weight:400;color:#333333;letter-spacing:-0.13px;">Создайте дело</span>
<span class="t" style="left:1937.5px;top:1398.5px;font-size:33.27px;line-height:33.27px;font-weight:400;color:#a8adb4;letter-spacing:-0.85px;">Запланируйте следующий шаг, чтобы не забыть о важном</span>
<div style="left:1757px;top:1517px;width:1973px;height:2px;background:#dfdddb;"></div>
<div style="left:2679.5px;top:1493.5px;width:191.5px;height:50.5px;background:#5cb0fb;border-radius:26px;"></div>
<span class="t" style="left:2716.0px;top:1504.7px;font-size:29.84px;line-height:29.84px;font-weight:700;color:#ffffff;letter-spacing:-0.47px;">Сегодня</span>
<div style="left:3528.5px;top:1493.5px;width:202px;height:50.5px;background:#f7f9fa;border-radius:26px;"></div>
<svg style="left:3551px;top:1508px;width:24px;height:24px;" viewBox="0 0 24 24"><path d="M1 2 h22 l-8 9 v11 l-6 -3 v-8z" fill="#a8adb4"/></svg>
<span class="t" style="left:3591.6px;top:1505.1px;font-size:26.45px;line-height:26.45px;font-weight:700;color:#a8adb4;letter-spacing:-1.58px;">ФИЛЬТР</span>
<div style="left:1820px;top:1580px;width:1910px;height:158.6px;background:#ffffff;border-radius:30px;box-shadow:0 4px 20px rgba(40,50,70,0.04);"></div>
<div style="left:1718px;top:1594px;width:74px;height:74px;border-radius:50%;background:#ffffff;"></div>
<svg style="left:1735px;top:1611px;width:40px;height:40px;" viewBox="0 0 40 40"><rect x="9" y="9" width="29" height="29" rx="4" fill="none" stroke="#b9bdc3" stroke-width="3" stroke-dasharray="0"/><rect x="2" y="2" width="30" height="30" rx="4" fill="#b9bdc3"/><rect x="2" y="2" width="30" height="30" rx="4" fill="none" stroke="#fff" stroke-width="0"/><path d="M17 9 v16 M9 17 h16" stroke="#fff" stroke-width="4"/></svg>
<span class="t" style="left:1858.3px;top:1611.3px;font-size:32.98px;line-height:32.98px;font-weight:700;color:#a8adb4;letter-spacing:-1.50px;">Создано на основании счёта</span>
<span class="t" style="left:2317.0px;top:1611.6px;font-size:32.59px;line-height:32.59px;font-weight:400;color:#b9bec4;letter-spacing:-1.89px;">15:07</span>
<span class="t" style="left:1858.3px;top:1667.9px;font-size:32.83px;line-height:32.83px;font-weight:400;color:#80868e;letter-spacing:-2.08px;">Счёт</span>
<span class="t" style="left:1937.5px;top:1666.6px;font-size:34.34px;line-height:34.34px;font-weight:400;color:#2067b0;letter-spacing:-0.67px;">Тур Байкал 13.02–20.02</span>
<svg style="left:3651.6px;top:1603.7px;width:46px;height:46px;" viewBox="0 0 100 100"><defs><clipPath id="av36741626"><circle cx="50" cy="50" r="50"/></clipPath><filter id="bl36741626"><feGaussianBlur stdDeviation="1.3"/></filter><linearGradient id="sk36741626" x1="0" y1="0" x2="0" y2="1"><stop offset="0" stop-color="#9fbde6"/><stop offset="0.6" stop-color="#d3e0ef"/><stop offset="1" stop-color="#eef3f8"/></linearGradient></defs><g clip-path="url(#av36741626)"><g filter="url(#bl36741626)"><rect width="100" height="100" fill="url(#sk36741626)"/><path d="M0 32 L10 28 L22 34 L30 40 V70 H0 Z" fill="#4f6280"/><path d="M0 55 Q15 50 30 60 V100 H0 Z" fill="#e6edf5"/><path d="M12 100 C10 80 14 60 22 52 C18 44 20 30 30 22 C38 16 48 20 50 30 C54 45 50 70 54 100 Z" fill="#c8bdad"/><path d="M24 38 C28 32 40 32 44 40 C42 48 30 50 24 38 Z" fill="#e6e0d6"/><circle cx="29" cy="38" r="2.2" fill="#2a2a2a"/><circle cx="43" cy="39" r="2.2" fill="#2a2a2a"/><ellipse cx="35" cy="45" rx="3" ry="2" fill="#3a3430"/><path d="M50 100 C50 80 52 62 60 58 C70 52 86 52 96 62 C100 70 100 90 100 100 Z" fill="#b2a690"/><path d="M62 100 C62 85 66 70 72 66 L90 66 C94 76 94 90 92 100 Z" fill="#3a342f"/><path d="M56 52 C60 60 76 68 92 58 C92 66 84 72 72 72 C62 70 56 62 56 52 Z" fill="#1d1d22"/><path d="M50 40 C48 24 58 20 66 21 C78 22 86 30 86 42 C84 40 76 30 60 34 C56 36 52 40 50 40Z" fill="#7b4b34"/><ellipse cx="66" cy="44" rx="13" ry="16" fill="#dea68e"/><path d="M52 36 C56 26 70 24 78 30 C72 30 62 32 54 42Z" fill="#8a5a40"/></g></g></svg>
<div style="left:1757px;top:1797.5px;width:1973px;height:2px;background:#dfdddb;"></div>
<div style="left:2666.5px;top:1774.5px;width:217.5px;height:50.5px;background:#dde2e5;border-radius:26px;"></div>
<span class="t" style="left:2703.5px;top:1785.2px;font-size:29.96px;line-height:29.96px;font-weight:700;color:#7e868c;letter-spacing:-0.35px;">28 января</span>
<div style="left:2730px;top:1838.5px;width:228px;height:36px;background:rgba(255,255,255,0.4);"></div>
<div style="left:1820px;top:1860.5px;width:1910px;height:400px;background:#ffffff;border-radius:30px;box-shadow:0 4px 20px rgba(40,50,70,0.04);"></div>
<div style="left:2766px;top:1899px;width:320px;height:33.5px;background:rgba(255,250,250,0.5);"></div>
<div style="left:1718px;top:1874px;width:74px;height:74px;border-radius:50%;background:#2fc6f6;"></div>
<svg style="left:1742px;top:1891px;width:32px;height:38px;" viewBox="0 0 32 38"><path d="M3 1 h17 l10 10 v24 a2 2 0 0 1 -2 2 h-25 a2 2 0 0 1 -2 -2 v-32 a2 2 0 0 1 2 -2z" fill="#fff"/><path d="M9 16 h13 M9 21 h13 M9 26 h9" stroke="#2fc6f6" stroke-width="2.6" stroke-linecap="round"/></svg>
<span class="t" style="left:1858.3px;top:1891.4px;font-size:33.01px;line-height:33.01px;font-weight:700;color:#333333;letter-spacing:-1.55px;">Подготовлен документ</span>
<span class="t" style="left:2230.0px;top:1891.9px;font-size:32.39px;line-height:32.39px;font-weight:400;color:#b9bec4;letter-spacing:-2.01px;">17:00</span>
<svg style="left:3651.6px;top:1883px;width:46px;height:46px;" viewBox="0 0 100 100"><defs><clipPath id="av36741906"><circle cx="50" cy="50" r="50"/></clipPath><filter id="bl36741906"><feGaussianBlur stdDeviation="1.3"/></filter><linearGradient id="sk36741906" x1="0" y1="0" x2="0" y2="1"><stop offset="0" stop-color="#9fbde6"/><stop offset="0.6" stop-color="#d3e0ef"/><stop offset="1" stop-color="#eef3f8"/></linearGradient></defs><g clip-path="url(#av36741906)"><g filter="url(#bl36741906)"><rect width="100" height="100" fill="url(#sk36741906)"/><path d="M0 32 L10 28 L22 34 L30 40 V70 H0 Z" fill="#4f6280"/><path d="M0 55 Q15 50 30 60 V100 H0 Z" fill="#e6edf5"/><path d="M12 100 C10 80 14 60 22 52 C18 44 20 30 30 22 C38 16 48 20 50 30 C54 45 50 70 54 100 Z" fill="#c8bdad"/><path d="M24 38 C28 32 40 32 44 40 C42 48 30 50 24 38 Z" fill="#e6e0d6"/><circle cx="29" cy="38" r="2.2" fill="#2a2a2a"/><circle cx="43" cy="39" r="2.2" fill="#2a2a2a"/><ellipse cx="35" cy="45" rx="3" ry="2" fill="#3a3430"/><path d="M50 100 C50 80 52 62 60 58 C70 52 86 52 96 62 C100 70 100 90 100 100 Z" fill="#b2a690"/><path d="M62 100 C62 85 66 70 72 66 L90 66 C94 76 94 90 92 100 Z" fill="#3a342f"/><path d="M56 52 C60 60 76 68 92 58 C92 66 84 72 72 72 C62 70 56 62 56 52 Z" fill="#1d1d22"/><path d="M50 40 C48 24 58 20 66 21 C78 22 86 30 86 42 C84 40 76 30 60 34 C56 36 52 40 50 40Z" fill="#7b4b34"/><ellipse cx="66" cy="44" rx="13" ry="16" fill="#dea68e"/><path d="M52 36 C56 26 70 24 78 30 C72 30 62 32 54 42Z" fill="#8a5a40"/></g></g></svg>
<div style="left:1857px;top:1957.5px;width:186px;height:186px;background:#e3f7fd;border-radius:30px;"></div>
<svg style="left:1858.3px;top:1958.5px;width:184px;height:184px;" viewBox="0 0 184 184"><defs><filter id="dsh" x="-20%" y="-20%" width="140%" height="140%"><feDropShadow dx="0" dy="4" stdDeviation="4" flood-color="#0a6a8a" flood-opacity="0.18"/></filter></defs><path d="M53 25 h58 l31 29 v88 a12 12 0 0 1 -12 12 h-77 a12 12 0 0 1 -12 -12 v-105 a12 12 0 0 1 12 -12z" fill="#ffffff" stroke="#2fc6f6" stroke-width="3" filter="url(#dsh)"/><path d="M113 27 v25 a5 5 0 0 0 5 5 h22 z" fill="#d6f1fb"/><path d="M57 67 h57 M57 80 h41" stroke="#80dcf9" stroke-width="5" stroke-linecap="round"/><rect x="63" y="104" width="23" height="6" fill="#2fc6f6"/><rect x="59" y="113" width="32" height="16" rx="2" fill="#2fc6f6"/><rect x="63" y="127" width="24" height="9" fill="#fff" stroke="#2fc6f6" stroke-width="3"/><circle cx="86" cy="118" r="1.6" fill="#fff"/><path d="M106 181 v-40 a35 35 0 0 1 35 -35 h40 v40 a35 35 0 0 1 -35 35 z" fill="#ffffff"/><circle cx="139" cy="139" r="16" fill="none" stroke="#2fc6f6" stroke-width="5"/><path d="M151 151 l11 11" stroke="#2fc6f6" stroke-width="6" stroke-linecap="round"/></svg>
<span class="t" style="left:2081.5px;top:1968.1px;font-size:33.74px;line-height:33.74px;font-weight:400;color:#a8adb4;letter-spacing:-1.66px;">Название</span>
<span class="t" style="left:2249.8px;top:1966.7px;font-size:35.43px;line-height:35.43px;font-weight:400;color:#333333;letter-spacing:-0.85px;">Счет (Россия) 24</span>
<span class="t" style="left:2081.5px;top:2026.9px;font-size:33.66px;line-height:33.66px;font-weight:400;color:#a8adb4;letter-spacing:-1.63px;">Ваша компания</span>
<span class="t" style="left:2081.5px;top:2070.4px;font-size:34.94px;line-height:34.94px;font-weight:400;color:#333333;letter-spacing:-1.24px;">ООО &quot;1С-БИТРИКС&quot;, ИНН 7717586110</span>
<span class="t" style="left:2081.5px;top:2131.2px;font-size:33.83px;line-height:33.83px;font-weight:400;color:#a8adb4;letter-spacing:-1.65px;">Клиент</span>
<div style="left:3257px;top:148.3px;width:504.6px;height:795.4px;background:#ffffff;border-radius:44px;box-shadow:0 14px 50px rgba(30,40,60,0.18), 0 2px 8px rgba(30,40,60,0.06);"></div>
<span class="t" style="left:3300.0px;top:196.0px;font-size:33.59px;line-height:33.59px;font-weight:400;color:#2e2e2e;letter-spacing:-0.07px;">Акт (Россия)</span>
<span class="t" style="left:3300.0px;top:279.7px;font-size:33.49px;line-height:33.49px;font-weight:400;color:#2e2e2e;letter-spacing:-0.13px;">Счет (Россия)</span>
<span class="t" style="left:3300.0px;top:364.4px;font-size:33.77px;line-height:33.77px;font-weight:400;color:#2e2e2e;letter-spacing:0.03px;">Счет-фактура (Россия)</span>
<span class="t" style="left:3300.0px;top:448.6px;font-size:33.53px;line-height:33.53px;font-weight:400;color:#2e2e2e;letter-spacing:-0.11px;">Накладная (Россия)</span>
<span class="t" style="left:3300.0px;top:531.1px;font-size:34.15px;line-height:34.15px;font-weight:400;color:#2e2e2e;letter-spacing:0.21px;">blank-dogovor-arendy-ofisa</span>
<span class="t" style="left:3300.0px;top:653.8px;font-size:34.08px;line-height:34.08px;font-weight:400;color:#2e2e2e;letter-spacing:0.20px;">Список документов</span>
<span class="t" style="left:3300.0px;top:738.6px;font-size:33.60px;line-height:33.60px;font-weight:400;color:#2e2e2e;letter-spacing:-0.07px;">Добавить новый шаблон</span>
<span class="t" style="left:3300.0px;top:861.6px;font-size:33.61px;line-height:33.61px;font-weight:400;color:#2e2e2e;letter-spacing:-0.07px;">Расширения</span>
<div style="left:3299px;top:608px;width:421px;height:2px;background:#edeff1;"></div>
<div style="left:3299px;top:815.5px;width:421px;height:2px;background:#edeff1;"></div>
<svg style="left:3684px;top:861px;width:22px;height:35px;" viewBox="0 0 22 35"><path d="M3 3 L18 17.5 L3 32" fill="none" stroke="#b9bdc3" stroke-width="2.6" stroke-linecap="round" stroke-linejoin="round"/></svg>
<div style="left:3480px;top:63px;width:276px;height:104.6px;border:12px solid #eb5656;border-radius:34px;box-shadow:0 0 44px rgba(235,86,86,0.28);"></div>
<div style="left:3267px;top:243.3px;width:305.8px;height:104.4px;border:12px solid #eb5656;border-radius:30px;box-shadow:0 0 44px rgba(235,86,86,0.28);"></div>
<div style="left:3726px;top:15px;width:102px;height:102px;border-radius:50%;background:#eb5656;"></div>
<div style="left:3540px;top:195px;width:102px;height:102px;border-radius:50%;background:#eb5656;"></div>
<svg style="left:3755px;top:40px;width:40px;height:50px;" viewBox="0 0 40 50"><path d="M4 4 H26 V46 H14 V15 H4 Z" fill="#fff"/></svg>
<span class="t" style="left:3575.0px;top:215.5px;font-size:59.64px;line-height:59.64px;font-weight:700;color:#ffffff;letter-spacing:0.43px;">2</span>
</div>
</body></html>
